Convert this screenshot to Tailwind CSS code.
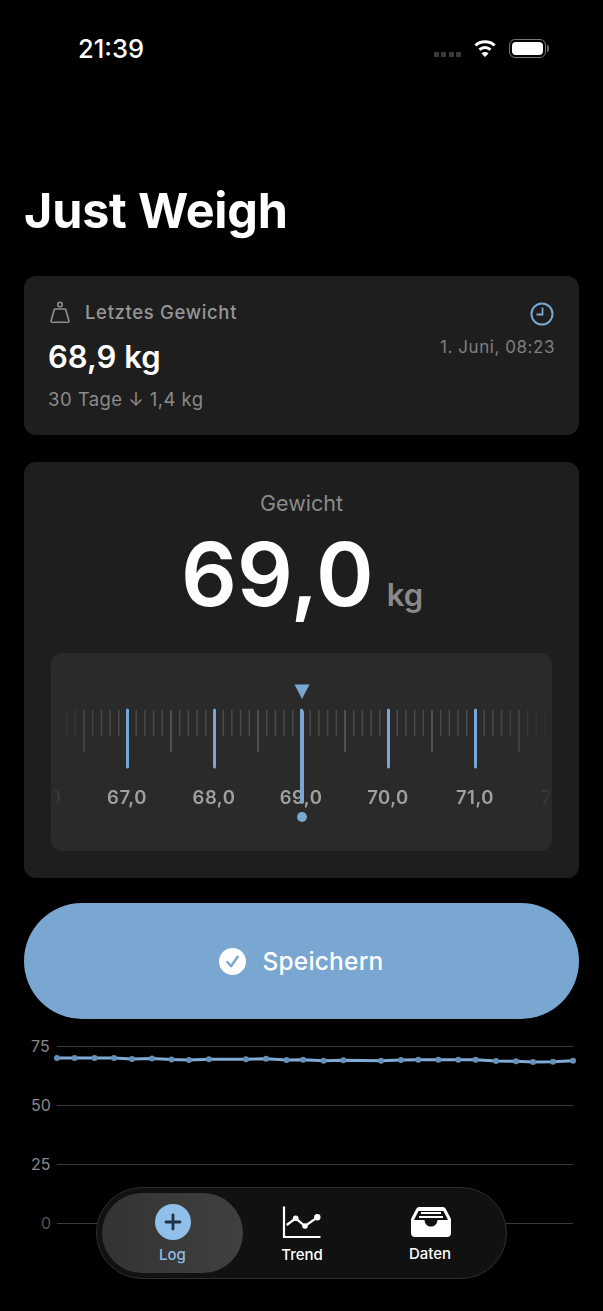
<!DOCTYPE html>
<html lang="de">
<head>
  <meta charset="UTF-8">
  <meta name="viewport" content="width=device-width, initial-scale=1.0">
  <title>Just Weigh</title>
  <script src="https://cdn.jsdelivr.net/npm/@tailwindcss/browser@4"></script>
</head>
<body class="bg-black text-white font-['Inter',sans-serif]">
<div class="relative w-[603px] h-[1311px] overflow-hidden">

  <!--status bar-->
  <div class="h-[98px] pt-[33px] pl-[78px] pr-[54px] flex justify-between items-start">
    <span class="text-[25.5px] leading-[32px] font-medium">21:39</span>
    <div class="flex items-start pt-[6px]">
      <div class="flex gap-[2.5px] mt-[13px] mr-[13px]">
        <i class="block w-[5px] h-[5px] rounded-[1px] bg-[#3a3a3a]"></i>
        <i class="block w-[5px] h-[5px] rounded-[1px] bg-[#3a3a3a]"></i>
        <i class="block w-[5px] h-[5px] rounded-[1px] bg-[#3a3a3a]"></i>
        <i class="block w-[5px] h-[5px] rounded-[1px] bg-[#3a3a3a]"></i>
      </div>
      <svg class="mr-[13px]" width="22" height="19" viewBox="0 0 22 19" fill="none" stroke="white" stroke-width="3">
        <path d="M1.5 6.5 C6.5 1.5 15.5 1.5 20.5 6.5"/>
        <path d="M5.5 10.8 C8.5 7.8 13.5 7.8 16.5 10.8"/>
        <path d="M11 18 L7.5 14.4 C9.5 12.6 12.5 12.6 14.5 14.4 Z" fill="white" stroke="none"/>
      </svg>
      <div class="relative w-[37px] h-[19px] border border-[#777] rounded-[6px] p-[2px] mr-[3px]">
        <div class="w-full h-full bg-white rounded-[4px]"></div>
        <div class="absolute right-[-4px] top-[5px] w-[2px] h-[7px] bg-[#666] rounded-r-[2px]"></div>
      </div>
    </div>
  </div>

  <h1 class="px-[24px] text-[48.5px] leading-[56px] font-bold tracking-[-0.2px] mt-[85px]">Just Weigh</h1>

  <main class="px-[24px] mt-[37px]">
    <!--letztes gewicht-->
    <section class="h-[159px] rounded-[12px] bg-[#1e1e1e] pl-[25px] pr-[24px] pt-[25px] flex justify-between">
      <div>
        <div class="flex items-center gap-[14px] h-[24px] -mt-[1px]">
          <svg width="22" height="24" viewBox="0 0 22 24" fill="none" stroke="#8e8e8e" stroke-width="1.6">
            <circle cx="11" cy="4.5" r="2.3"/>
            <path d="M5.5 9 H16.5 L20 21 a1 1 0 0 1 -1 1.2 H3 a1 1 0 0 1 -1 -1.2 Z" stroke-linejoin="round"/>
          </svg>
          <span class="text-[18.5px] font-medium tracking-[0.65px] text-[#959595] mt-[2px]">Letztes Gewicht</span>
        </div>
        <div class="text-[31px] leading-[36px] font-semibold -ml-[1px] mt-[15px]">68,9 kg</div>
        <div class="text-[18.5px] leading-[24px] tracking-[0.45px] text-[#8a8a8a] -ml-[1px] mt-[12px]">30 Tage ↓ 1,4 kg</div>
      </div>
      <div class="flex flex-col items-end -mt-[1px]">
        <svg class="mr-[1px] mt-[2px]" width="24" height="24" viewBox="0 0 24 24" fill="none" stroke="#7aa7d1" stroke-width="2">
          <circle cx="12" cy="12" r="10.5"/>
          <path d="M12.5 5.5 V12.5 H6.5" stroke-width="1.8"/>
        </svg>
        <span class="text-[17px] leading-[24px] tracking-[0.55px] text-[#7f7f7f] mt-[9px]">1. Juni, 08:23</span>
      </div>
    </section>

    <!--gewicht picker-->
    <section class="h-[416px] mt-[27px] rounded-[12px] bg-[#1e1e1e] px-[27px] pt-[27px]">
      <div class="text-center text-[21.5px] leading-[28px] text-[#8a8a8a]">Gewicht</div>
      <div class="flex justify-center items-baseline gap-[13px] h-[100px] mt-[12px] pl-[1px]">
        <span class="text-[87.5px] leading-[90px] font-semibold">69,0</span>
        <span class="text-[31px] font-semibold text-[#8a8a8a]">kg</span>
      </div>
      <div class="relative h-[198px] mt-[24px] rounded-[12px] bg-[#2a2a2a] overflow-hidden">
        <div class="absolute inset-0 [mask-image:linear-gradient(90deg,transparent_0%,black_11%,black_89%,transparent_100%)]">
          <svg id="ticks" class="absolute left-0 top-0" width="501" height="198"></svg>
          <span class="absolute left-[-51px] top-[132px] w-[80px] text-center text-[18.5px] leading-[24px] font-semibold tracking-[0.5px] text-[#a0a0a0]">66,0</span>
          <span class="absolute left-[36px] top-[132px] w-[80px] text-center text-[18.5px] leading-[24px] font-semibold tracking-[0.5px] text-[#a0a0a0]">67,0</span>
          <span class="absolute left-[123px] top-[132px] w-[80px] text-center text-[18.5px] leading-[24px] font-semibold tracking-[0.5px] text-[#a0a0a0]">68,0</span>
          <span class="absolute left-[210px] top-[132px] w-[80px] text-center text-[18.5px] leading-[24px] font-semibold tracking-[0.5px] text-[#a0a0a0]">69,0</span>
          <span class="absolute left-[297px] top-[132px] w-[80px] text-center text-[18.5px] leading-[24px] font-semibold tracking-[0.5px] text-[#a0a0a0]">70,0</span>
          <span class="absolute left-[384px] top-[132px] w-[80px] text-center text-[18.5px] leading-[24px] font-semibold tracking-[0.5px] text-[#a0a0a0]">71,0</span>
          <span class="absolute left-[471px] top-[132px] w-[80px] text-center text-[18.5px] leading-[24px] font-semibold tracking-[0.5px] text-[#a0a0a0]">72,0</span>
        </div>
        <!--zeiger-->
        <svg class="absolute left-[243px] top-[31px]" width="16" height="16" viewBox="0 0 16 16"><path d="M0.5 0.5 H15.5 L8 15 Z" fill="#7aa7d1"/></svg>
        <div class="absolute left-[249px] top-[57px] w-[4px] h-[94px] rounded-full bg-[#7aa7d1]"></div>
        <div class="absolute left-[246px] top-[159px] w-[10px] h-[10px] rounded-full bg-[#7aa7d1]"></div>
      </div>
    </section>

    <button class="mt-[25px] w-full h-[116px] rounded-[58px] bg-[#7aa7d1] flex items-center justify-center gap-[16px]">
      <svg width="27" height="27" viewBox="0 0 26 26">
        <circle cx="13" cy="13" r="13" fill="white"/>
        <path d="M8 13.5 L11.6 17.5 L18 8.5" fill="none" stroke="#7aa7d1" stroke-width="2.4" stroke-linecap="round" stroke-linejoin="round"/>
      </svg>
      <span class="text-[24.5px] font-medium tracking-[0.2px]">Speichern</span>
    </button>

    <!--verlauf-->
    <div class="relative h-[200px] mt-[17px] -mx-[24px]">
      <svg class="absolute left-0 top-0" width="603" height="200" viewBox="0 1036 603 200" fill="none">
        <g stroke="#3a3a3a" stroke-width="1">
          <path d="M57 1046.5 H573"/>
          <path d="M57 1105.5 H573"/>
          <path d="M57 1164.5 H573"/>
          <path d="M57 1223.5 H573"/>
        </g>
        <polyline stroke="#7fabd4" stroke-width="3" stroke-linejoin="round" points="57,1058 74.6,1058 94.6,1058 114,1058 132,1059 152,1058.5 171.6,1059.5 189,1060 209,1059.3 246,1059.3 266,1058.7 286.6,1060 303,1059.7 323.6,1060.7 343.3,1060.3 381,1060.7 401,1060 418.3,1059.7 438.3,1059.7 458.3,1059.7 475.6,1059.7 496,1061 516,1061.3 533,1062 553,1061.7 573,1060.7"/>
        <g id="dots" fill="#6690b8"></g>
      </svg>
      <span class="absolute left-[31px] top-[0px] text-[16px] leading-[20px] text-[#8a8a8a]">75</span>
      <span class="absolute left-[31px] top-[59px] text-[16px] leading-[20px] text-[#8a8a8a]">50</span>
      <span class="absolute left-[31px] top-[118px] text-[16px] leading-[20px] text-[#8a8a8a]">25</span>
      <span class="absolute left-[41px] top-[177px] text-[16px] leading-[20px] text-[#555]">0</span>
    </div>
  </main>

  <!--tab bar-->
  <nav class="absolute left-[96px] top-[1187px] w-[411px] h-[92px] rounded-[46px] bg-[#111111] border border-[#2e2e2e] p-[5px] flex items-stretch">
    <a class="w-[141px] rounded-[40px] bg-linear-to-r from-[#333333] to-[#404040] flex flex-col items-center pt-[11px]">
      <svg width="36" height="36" viewBox="0 0 36 36">
        <circle cx="18" cy="18" r="18" fill="#90bfea"/>
        <path d="M18 11 V25 M11 18 H25" stroke="#22303f" stroke-width="2.8" stroke-linecap="round"/>
      </svg>
      <span class="text-[15px] leading-[20px] font-medium text-[#8fbbe6] mt-[5px]">Log</span>
    </a>
    <a class="w-[118px] flex flex-col items-center pt-[12px]">
      <svg width="40" height="34" viewBox="0 0 40 34" fill="none" stroke="white">
        <path d="M2 1.5 V32 H38.5" stroke-width="2.2"/>
        <path d="M4.7 20 L13.7 13.3 L23 21 L35.3 12.3" stroke-width="2.2"/>
        <circle cx="13.7" cy="13.3" r="2.8" fill="white" stroke="none"/>
        <circle cx="23" cy="21" r="2.8" fill="white" stroke="none"/>
        <circle cx="35.3" cy="12.3" r="3.2" fill="white" stroke="none"/>
      </svg>
      <span class="text-[15px] leading-[20px] font-medium mt-[6px]">Trend</span>
    </a>
    <a class="w-[138px] flex flex-col items-center pt-[13px]">
      <svg class="ml-[2px]" width="42" height="32" viewBox="0 0 42 32">
        <path d="M9 1 H33 a3 3 0 0 1 2.6 1.5 L41 13 V27 a4 4 0 0 1 -4 4 H5 a4 4 0 0 1 -4 -4 V13 L6.4 2.5 A3 3 0 0 1 9 1 Z" fill="white"/>
        <path d="M4 14 H14.5 C15 18 17 20.5 21 20.5 C25 20.5 27 18 27.5 14 H38 L33.5 5 H8.5 Z" fill="#111111"/>
        <path d="M11 7 H31 M9 11 H33" stroke="white" stroke-width="1.8"/>
      </svg>
      <span class="text-[15px] leading-[20px] font-medium mt-[6px]">Daten</span>
    </a>
  </nav>
</div>

<script>
// Lineal-Striche: alle 8,7px einer, jeder 5. mittel, jeder 10. blau
const NS = "http://www.w3.org/2000/svg";
const ticks = document.getElementById("ticks");
for (let i = -29; i <= 29; i++) {
  const x = 250.5 + i * 8.7;
  const line = document.createElementNS(NS, "line");
  const major = i % 10 === 0;
  const mid = !major && i % 5 === 0;
  line.setAttribute("x1", x);
  line.setAttribute("x2", x);
  line.setAttribute("y1", 57);
  line.setAttribute("y2", major ? 114 : mid ? 99 : 83);
  line.setAttribute("stroke", major ? "#7aa7d1" : mid ? "#5c5c5c" : "#4a4a4a");
  line.setAttribute("stroke-width", major ? 3 : 1.5);
  line.setAttribute("stroke-linecap", major ? "round" : "butt");
  ticks.appendChild(line);
}
const dots = document.getElementById("dots");
document.querySelector("polyline").getAttribute("points").split(" ").forEach(p => {
  const [x, y] = p.split(",");
  const c = document.createElementNS(NS, "circle");
  c.setAttribute("cx", x);
  c.setAttribute("cy", y);
  c.setAttribute("r", 3);
  dots.appendChild(c);
});
</script>
</body>
</html>
